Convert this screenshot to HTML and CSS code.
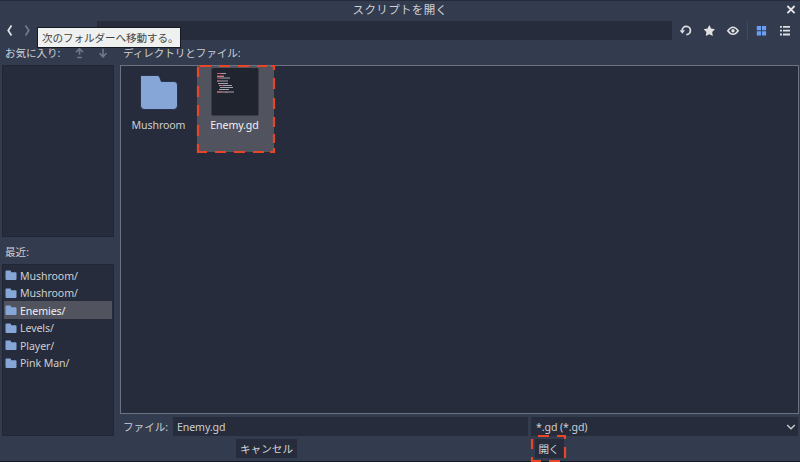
FILE: index.html
```html
<!DOCTYPE html>
<html lang="ja">
<head>
<meta charset="utf-8">
<title>スクリプトを開く</title>
<link rel="stylesheet" href="styles.css">
</head>
<body>
<svg class="defs" aria-hidden="true">
  <symbol id="folder" viewBox="0 0 12 11"><path d="M1.3 0.5H5.2Q6 .5 6 1.4V2.2H10.7Q11.5 2.2 11.5 3V9Q11.5 10 10.5 10H1.5Q.5 10 .5 9V1.3Q.5 .5 1.3 .5Z" fill="#87a6d8"/></symbol>
</svg>
<div class="dialog">
  <header class="titlebar">
    <h1 class="title">スクリプトを開く</h1>
    <svg class="close" viewBox="0 0 10 10"><path d="M1.4 1L8.6 8.2M8.6 1L1.4 8.2"/></svg>
  </header>
  <div class="toolbar">
    <svg class="nav" viewBox="0 0 36 20"><path d="M11.5 4.5L8.2 9.5L11.5 14.5" stroke="#e6e6e8"/><path d="M25.5 4.5L28.8 9.5L25.5 14.5" stroke="#767b88"/></svg>
    <div class="path"></div>
    <svg class="tools" viewBox="0 0 128 20">
      <g fill="none" stroke="#e0e0e2" stroke-width="1.8">
        <path d="M10.2 9.4A4.1 4.1 0 1 1 14.3 13.6"/>
        <path d="M55.8 9.7Q61 2.6 66.2 9.7Q61 16.8 55.8 9.7Z" stroke-width="1.5"/>
      </g>
      <g fill="#e0e0e2">
        <path d="M7.6 9.3H13L10.4 12.8Z"/>
        <path d="M37.3 4L39.1 7.6L43 8.2L40.2 11L40.8 15L37.3 13.2L33.8 15L34.4 11L31.6 8.2L35.5 7.6Z"/>
        <circle cx="61" cy="9.7" r="1.7"/>
        <path d="M108 5h1.9v1.8H108zM111 5h7v1.8h-7zM108 8.8h1.9v1.8H108zM111 8.8h7v1.8h-7zM108 12.6h1.9v1.8H108zM111 12.6h7v1.8h-7z"/>
      </g>
      <path d="M75.4 0V19" stroke="#444b5c"/>
      <path d="M84.8 5h4.2v4.2h-4.2zM89.9 5h4.2v4.2h-4.2zM84.8 10.2h4.2v4.2h-4.2zM89.9 10.2h4.2v4.2h-4.2z" fill="#6a9ff3"/>
    </svg>
  </div>
  <main class="content">
    <aside class="side">
      <div class="label"><span class="fav">お気に入り:</span>
        <svg class="arrows" viewBox="0 0 36 12"><path d="M5.5 1.5V7.7M2 5.2L5.5 1.7L9 5.2M3.2 10.5h4.6M29 1.8V9.5M25.6 6.2L29 9.8L32.4 6.2"/></svg>
      </div>
      <div class="panel favorites"></div>
      <div class="label recent-label"><span>最近:</span></div>
      <ul class="panel recent">
        <li><svg><use href="#folder"/></svg>Mushroom/</li>
        <li><svg><use href="#folder"/></svg>Mushroom/</li>
        <li class="selected"><svg><use href="#folder"/></svg>Enemies/</li>
        <li><svg><use href="#folder"/></svg>Levels/</li>
        <li><svg><use href="#folder"/></svg>Player/</li>
        <li><svg><use href="#folder"/></svg>Pink Man/</li>
      </ul>
    </aside>
    <section class="files">
      <div class="label"><span class="dirs">ディレクトリとファイル:</span></div>
      <div class="grid">
        <div class="item">
          <svg class="big" viewBox="0 0 48 48"><path d="M9.5 7.5H26.5Q28 7.5 28.7 9.2L30.3 13.5H43Q46.5 13.5 46.5 17V37.5Q46.5 41.5 42.5 41.5H13.5Q9.5 41.5 9.5 37.5Z" fill="#86a6d8" stroke="#202638" stroke-width=".8"/></svg>
          <span>Mushroom</span>
        </div>
        <div class="item chosen">
          <svg class="big" viewBox="0 0 48 48"><rect x=".5" width="47" height="47.5" rx="1.5" fill="#1f242f"/>
            <g fill="none" stroke="#a5a4ac" stroke-width="1.2"><path d="M6 5.5h9M6 8.5h7M9 10h10M6 13h11M7 15.5h10M8 17.5h13M9 19.5h13M8 21.5h10M6 24h17"/></g>
            <path d="M6 5.5h4M6 8h7M6 10h3M6 13h2M10 17.5h2M6 24h5M14 24.5h3" stroke="#d8546a" fill="none"/>
          </svg>
          <span>Enemy.gd</span>
          <svg class="mark" viewBox="0 0 78 89"><path d="M3 2h11M22 2h11M41 2h11M60 2h10M74 2h3V6M1 3v10M1 22v11M1 41v11M1 61v11M1 80v8h9M18 88h11M37 88h11M56 88h11M73 88h4v-4M77 14v11M77 34v11M77 53v10M77 70v9"/></svg>
        </div>
      </div>
      <div class="file-row">
        <label class="file-label">ファイル:</label>
        <div class="field name">Enemy.gd</div>
        <div class="field filter">*.gd (*.gd)<svg viewBox="0 0 10 8"><path d="M1.2 2L5 5.7L8.8 2"/></svg></div>
      </div>
    </section>
  </main>
  <footer class="actions">
    <button class="cancel">キャンセル</button>
    <button class="open">開く<svg class="mark" viewBox="0 0 35 27"><path d="M7 1h11M26 1h8v3M1 4v10M1 22v4h9M18 26h11M34 12v11"/></svg></button>
  </footer>
</div>
<div class="tooltip">次のフォルダーへ移動する。</div>
</body>
</html>
```
FILE: styles.css
```css
* { box-sizing: border-box; }
body {
  margin: 0;
  width: 800px;
  height: 462px;
  overflow: hidden;
  font: 10.6px/16px "Noto Sans", "Noto Sans CJK JP", sans-serif;
  color: #cdcfd3;
  background: #333b4f;
}
svg { display: block; overflow: visible; flex: none; }
.defs { position: absolute; width: 0; height: 0; }
.dialog {
  height: 462px;
  display: flex;
  flex-direction: column;
  border-top: 1px solid #252b3a;
  border-bottom: 1px solid #151923;
}
.titlebar {
  height: 20px;
  display: grid;
  grid-template-columns: 1fr auto 1fr;
  align-items: center;
}
.title {
  grid-column: 2;
  margin: -2px 0 0;
  font-size: 11.5px;
  font-weight: 400;
  line-height: 18px;
  letter-spacing: .35px;
}
.close { width: 10px; height: 10px; justify-self: end; margin: -3px 4px 0 0; }
.close path { stroke: #e6e6e8; stroke-width: 1.8; }
.toolbar { height: 20px; display: flex; }
.nav { width: 36px; height: 20px; }
.nav path { fill: none; stroke-width: 1.7; }
.path { flex: 1; height: 19px; margin-left: 61px; background: #262c3b; }
.tools { width: 128px; height: 20px; }
.content { display: flex; height: 395px; padding-left: 2px; gap: 6px; }
.side { width: 112px; display: flex; flex-direction: column; }
.label { height: 24px; display: flex; align-items: center; padding-left: 3px; }
.fav { width: 69px; letter-spacing: -.1px; white-space: nowrap; }
.arrows { width: 36px; height: 12px; }
.arrows path { fill: none; stroke: #737987; stroke-width: 1.6; }
.dirs { letter-spacing: -.1px; }
.panel { background: #262c3b; border: 1px solid #202634; margin: 0; }
.favorites { height: 172px; }
.recent-label { height: 27px; padding-top: 3px; }
.recent { flex: 1; padding: 1.4px 1px; list-style: none; letter-spacing: -.08px; }
.recent li { height: 17.5px; display: flex; align-items: center; gap: 3px; padding: 1px 0 0 1px; line-height: 16px; }
.recent svg { width: 12px; height: 11px; }
.recent .selected { background: #51545f; color: #f0f0f2; }
.files { width: 680px; display: flex; flex-direction: column; }
.grid {
  display: flex;
  height: 349px;
  width: 679px;
  border: 1px solid #6c7280;
  background: #262c3b;
}
.item { position: relative; width: 75px; height: 86px; padding-top: 2px; display: flex; flex-direction: column; align-items: center; line-height: 16px; letter-spacing: -.1px; }
.big { width: 48px; height: 48px; }
.item .big { margin-bottom: 1px; }
.item:first-child .big { margin-right: 7px; }
.chosen { width: 77px; margin-left: 1px; padding-right: 2px; background: #51545f; color: #f2f2f4; }
.mark { position: absolute; }
.mark path { fill: none; stroke: #e94528; stroke-width: 2.2; }
.item .mark { left: 0; top: -2px; width: 78px; height: 89px; }
.file-row { display: flex; margin-top: 3px; height: 19px; align-items: center; }
.file-label { width: 53px; padding-left: 3px; }
.field { height: 19px; background: #262c3b; padding: 1px 4px; line-height: 18px; letter-spacing: -.1px; }
.name { width: 355px; }
.filter { flex: 1; margin: 0 2px 0 3px; display: flex; align-items: center; justify-content: space-between; padding: 0 2px 0 5px; }
.filter svg { width: 10px; height: 8px; }
.filter path { fill: none; stroke: #c8cace; stroke-width: 1.5; }
.actions { display: flex; margin-top: 3px; padding-left: 236px; }
button { position: relative; height: 19px; padding: 0; border: 0; background: #262c3b; color: #d6d7da; font: inherit; line-height: 18px; white-space: nowrap; }
.cancel { width: 61px; }
.open { width: 29px; margin-left: 238px; padding-right: 2px; letter-spacing: -.6px; }
.open .mark { left: -4px; top: -4px; width: 35px; height: 27px; }
.tooltip {
  position: absolute;
  left: 37px;
  top: 27px;
  width: 144px;
  height: 21px;
  padding: 0 4px;
  border: 1px solid #161a22;
  background: #eff0f0;
  color: #444;
  line-height: 20px;
  letter-spacing: -.1px;
  white-space: nowrap;
}
```
